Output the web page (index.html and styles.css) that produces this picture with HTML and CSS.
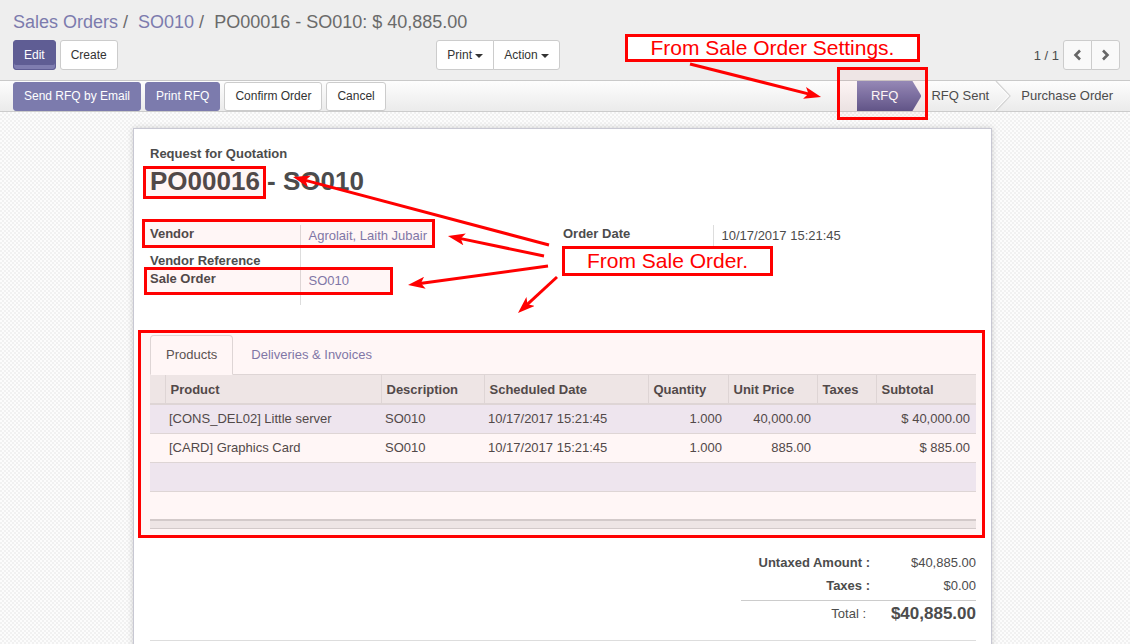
FILE: index.html
```html
<!DOCTYPE html>
<html>
<head>
<meta charset="utf-8">
<title>PO00016 - SO010</title>
<link rel="stylesheet" href="styles.css">
</head>
<body>
<div class="cp">
  <ol class="bc">
    <li><a>Sales Orders</a></li>
    <li><a>SO010</a></li>
    <li class="active">PO00016 - SO010: $ 40,885.00</li>
  </ol>
  <div class="cp-row">
    <div class="cp-left">
      <div class="cp-btns">
        <button class="btn btn-edit">Edit</button>
        <button class="btn">Create</button>
      </div>
      <div class="btn-group">
        <button class="btn">Print <span class="caret"></span></button>
        <button class="btn">Action <span class="caret"></span></button>
      </div>
    </div>
    <div class="cp-right">
      <span class="pager-val">1 / 1</span>
      <div class="btn-group">
        <button class="btn pbtn"><svg width="9" height="12" viewBox="0 0 9 12"><path d="M7 1.5 L2.5 6 L7 10.5" fill="none" stroke="#666" stroke-width="2.6"/></svg></button>
        <button class="btn pbtn"><svg width="9" height="12" viewBox="0 0 9 12"><path d="M2 1.5 L6.5 6 L2 10.5" fill="none" stroke="#666" stroke-width="2.6"/></svg></button>
      </div>
    </div>
  </div>
</div>

<div class="sb">
  <div class="sb-btns">
    <button class="btn btn-primary">Send RFQ by Email</button>
    <button class="btn btn-primary">Print RFQ</button>
    <button class="btn">Confirm Order</button>
    <button class="btn">Cancel</button>
  </div>
  <div class="sb-status">
    <span class="st st-active">RFQ</span>
    <span class="st st-sent">RFQ Sent</span>
    <svg class="chev" width="17" height="30" viewBox="0 0 17 30"><polyline points="1,0 15,15 1,30" fill="none" stroke="#d5d5d5" stroke-width="1.3"/><polyline points="0,1 13.6,15 0,29" fill="none" stroke="#fff" stroke-width="1"/></svg>
    <span class="st st-po">Purchase Order</span>
  </div>
</div>

<div class="fbg">
  <div class="sheet">
    <div class="title-lbl">Request for Quotation</div>
    <h1 class="title">PO00016 - SO010</h1>
    <div class="groups">
      <table class="grp">
        <tr class="r1"><td class="lbl">Vendor</td><td class="val"><a class="lnk">Agrolait, Laith Jubair</a></td></tr>
        <tr class="r2"><td class="lbl">Vendor Reference</td><td class="val"></td></tr>
        <tr class="r3"><td class="lbl">Sale Order</td><td class="val"><a class="lnk">SO010</a></td></tr>
      </table>
      <table class="grp">
        <tr class="r1"><td class="lbl">Order Date</td><td class="val">10/17/2017 15:21:45</td></tr>
      </table>
    </div>

    <div class="nb">
      <ul class="tabs">
        <li><a class="tab active">Products</a></li>
        <li><a class="tab">Deliveries &amp; Invoices</a></li>
      </ul>
      <table class="lines">
        <colgroup>
          <col class="c0"><col class="c1"><col class="c2"><col class="c3"><col class="c4"><col class="c5"><col class="c6"><col class="c7">
        </colgroup>
        <thead>
          <tr><th></th><th>Product</th><th>Description</th><th>Scheduled Date</th><th>Quantity</th><th>Unit Price</th><th>Taxes</th><th>Subtotal</th></tr>
        </thead>
        <tbody>
          <tr class="odd"><td></td><td>[CONS_DEL02] Little server</td><td>SO010</td><td>10/17/2017 15:21:45</td><td class="num">1.000</td><td class="num">40,000.00</td><td></td><td class="num">$ 40,000.00</td></tr>
          <tr><td></td><td>[CARD] Graphics Card</td><td>SO010</td><td>10/17/2017 15:21:45</td><td class="num">1.000</td><td class="num">885.00</td><td></td><td class="num">$ 885.00</td></tr>
          <tr class="odd"><td colspan="8"></td></tr>
          <tr><td colspan="8"></td></tr>
        </tbody>
        <tfoot>
          <tr><td colspan="8"></td></tr>
        </tfoot>
      </table>
    </div>

    <div class="totals-wrap">
      <table class="totals">
        <tr><td class="tl">Untaxed Amount :</td><td class="tv">$40,885.00</td></tr>
        <tr><td class="tl">Taxes :</td><td class="tv">$0.00</td></tr>
        <tr class="sp"><td colspan="2"></td></tr>
        <tr class="tot"><td class="tl tl-total">Total :</td><td class="tv tv-total">$40,885.00</td></tr>
      </table>
    </div>
    <div class="divider"></div>
  </div>
</div>

<svg class="arrows" width="1130" height="644" viewBox="0 0 1130 644">
  <defs>
    <marker id="ah" viewBox="0 0 17 12" refX="5" refY="6" markerWidth="17" markerHeight="12" markerUnits="userSpaceOnUse" orient="auto">
      <path d="M0,0 L17,6 L0,12 L4,6 Z" fill="#ff0000"/>
    </marker>
  </defs>
  <g stroke="#ff0000" stroke-width="3" fill="none" marker-end="url(#ah)">
    <line x1="690" y1="64" x2="809.4" y2="94.1"/>
    <line x1="549" y1="245" x2="304.6" y2="180.1"/>
    <line x1="544" y1="256" x2="459.7" y2="238.4"/>
    <line x1="548" y1="266" x2="419.9" y2="283.4"/>
    <line x1="557" y1="277" x2="526.8" y2="304.9"/>
  </g>
</svg>

<div class="ann note note-a">From Sale Order Settings.</div>
<div class="ann hl hl-rfq"></div>
<div class="ann hl hl-po"></div>
<div class="ann hl hl-vendor"></div>
<div class="ann hl hl-so"></div>
<div class="ann note note-f">From Sale Order.</div>
<div class="ann hl hl-nb"></div>
</body>
</html>
```

FILE: styles.css
```css
* { box-sizing: border-box; }
html, body { margin: 0; padding: 0; }
body {
  position: relative;
  width: 1130px;
  height: 644px;
  overflow: hidden;
  font-family: "Liberation Sans", Arial, sans-serif;
  font-size: 13px;
  color: #4c4c4c;
  background: #fff;
}
a { cursor: pointer; }

/* ---------- control panel ---------- */
.cp {
  background: #eeeeee;
  padding: 10px 10px 10px 13px;
  border-bottom: 1px solid #c9c9c9;
}
.bc {
  list-style: none;
  margin: 0 0 6px;
  padding: 0;
  display: flex;
  font-size: 18px;
  line-height: 24px;
  color: #6a6a6a;
}
.bc a { color: #7c7bad; }
.bc li + li::before { content: "/\00a0"; padding: 0 5px; color: #6a6a6a; }
.cp-row { display: flex; height: 30px; }
.cp-left {
  width: 553px;
  display: flex;
  justify-content: space-between;
  padding-right: 6px;
}
.cp-btns { display: flex; gap: 4px; }
.cp-right {
  flex: 1;
  display: flex;
  justify-content: flex-end;
  align-items: center;
  gap: 4px;
}
.pager-val { font-size: 13px; color: #4c4c4c; }

.btn {
  font-family: "Liberation Sans", Arial, sans-serif;
  font-size: 12px;
  line-height: 18px;
  padding: 5px 10px;
  height: 30px;
  margin: 0;
  border: 1px solid #cccccc;
  border-radius: 3px;
  background: #ffffff;
  color: #333333;
  white-space: nowrap;
}
.btn-primary { background: #7c7bad; border-color: #7c7bad; color: #fff; }
.btn-edit {
  background: #5f5d94;
  border-color: #5f5d94;
  color: #fff;
  box-shadow: inset 0 -4px 0 #7f7db0;
}
.btn-group { display: flex; }
.btn-group .btn { border-radius: 0; }
.btn-group .btn + .btn { margin-left: -1px; }
.btn-group .btn:first-child { border-radius: 3px 0 0 3px; }
.btn-group .btn:last-child { border-radius: 0 3px 3px 0; }
.caret {
  display: inline-block;
  width: 0; height: 0;
  margin-left: 0;
  vertical-align: middle;
  border-top: 4px solid #333;
  border-left: 4px solid transparent;
  border-right: 4px solid transparent;
}
.pbtn {
  width: 29px;
  padding: 0;
  background: #f9f9f9;
  display: flex;
  align-items: center;
  justify-content: center;
}

/* ---------- status bar ---------- */
.sb {
  display: flex;
  justify-content: space-between;
  height: 31px;
  padding-left: 13px;
  background: linear-gradient(#fdfdfd, #ebebeb);
  border-bottom: 1px solid #cccccc;
}
.sb-btns { display: flex; gap: 4px; align-items: center; }
.sb-btns .btn { height: 29px; padding: 4px 10px 6px; }
.sb-status { display: flex; align-items: stretch; height: 30px; }
.st { line-height: 30px; font-size: 13px; color: #4c4c4c; white-space: nowrap; }
.st-active {
  padding: 0 23px 0 14px;
  color: #fff;
  background: linear-gradient(#928dbd, #5c588d);
  clip-path: polygon(0 0, calc(100% - 9px) 0, 100% 50%, calc(100% - 9px) 100%, 0 100%);
}
.st-sent { padding: 0 6px 0 10px; }
.chev { display: block; }
.st-po { padding: 0 17px 0 9px; }

/* ---------- form ---------- */
.fbg {
  height: 532px;
  padding-top: 16px;
  overflow: hidden;
  background-color: #f8f8f8;
  background-image: repeating-conic-gradient(#f1f1f1 0 25%, #fcfcfc 0 50%);
  background-size: 4px 4px;
}
.sheet {
  width: 859px;
  margin-left: 133px;
  min-height: 600px;
  padding: 16px 15px 0 16px;
  background: #fff;
  border: 1px solid #c8c8d3;
  box-shadow: 0 0 6px rgba(0, 0, 0, 0.18);
}
.title-lbl { font-weight: bold; line-height: 18px; }
.title {
  margin: 3px 0 0;
  font-size: 26px;
  line-height: 30px;
  font-weight: bold;
  color: #4c4c4c;
}
.groups { display: flex; margin-top: 29px; }
.grp { flex: 1; border-collapse: collapse; align-self: flex-start; }
.grp td { padding: 0; vertical-align: top; line-height: 18px; }
.grp .lbl {
  width: 150px;
  font-weight: bold;
  border-right: 1px solid #dddddd;
}
.grp .val { padding: 2px 0 0 8px; }
.grp .r1 { height: 27px; }
.grp .r2 { height: 18px; }
.grp .r3 { height: 35px; }
.lnk { color: #7c7bad; }

/* notebook */
.nb { margin-top: 30px; }
.tabs {
  list-style: none;
  margin: 0;
  padding: 0;
  display: flex;
  border-bottom: 1px solid #dddddd;
}
.tabs li { margin-bottom: -1px; }
.tab {
  display: block;
  padding: 10px 15px;
  line-height: 18px;
  margin-right: 2px;
  border: 1px solid transparent;
  border-radius: 4px 4px 0 0;
  color: #7c7bad;
}
.tab.active {
  color: #555555;
  background: #fff;
  border-color: #dddddd #dddddd transparent;
}
.lines {
  width: 100%;
  border-collapse: collapse;
  table-layout: fixed;
}
.c0 { width: 15px; }
.c1 { width: 216px; }
.c2 { width: 103px; }
.c3 { width: 164px; }
.c4 { width: 80px; }
.c5 { width: 89px; }
.c6 { width: 59px; }
.c7 { width: 100px; }
.lines th {
  height: 29px;
  padding: 0 5px;
  text-align: left;
  font-weight: bold;
  background: #eeeeee;
  border-bottom: 2px solid #dddddd;
  white-space: nowrap;
}
.lines th + th { border-left: 1px solid #dddddd; }
.lines tbody tr { height: 29px; }
.lines tbody tr + tr td { border-top: 1px solid #dddddd; }
.lines td { padding: 0 4px; white-space: nowrap; overflow: hidden; }
.lines tbody tr.odd { background: #eeeef7; }
.lines td.num { text-align: right; padding-right: 6px; }
.lines tfoot td {
  height: 8px;
  padding: 0;
  background: #eeeeee;
  border-top: 2px solid #d2d2d2;
  border-bottom: 1px solid #d2d2d2;
}

/* totals */
.totals-wrap { display: flex; justify-content: flex-end; margin-top: 23px; }
.totals { width: 235px; border-collapse: collapse; }
.totals tr { height: 23px; }
.totals td { padding: 0; line-height: 18px; white-space: nowrap; }
.totals .tl { text-align: right; font-weight: bold; padding-right: 6px; }
.totals .tv { text-align: right; width: 100px; }
.totals .sp { height: 3px; }
.totals .tot { height: 26px; }
.totals .tot td { border-top: 1px solid #cccccc; }
.totals .tl-total { font-weight: normal; padding-right: 10px; }
.totals .tv-total { font-size: 17px; font-weight: bold; }
.divider { margin-top: 13px; border-top: 1px solid #dddddd; }

/* ---------- annotations ---------- */
.arrows { position: absolute; left: 0; top: 0; pointer-events: none; }
.ann { position: absolute; border: 3px solid #ff0000; }
.hl { background: rgba(255, 0, 0, 0.035); }
.note {
  background: #fff;
  color: #ff0000;
  font-size: 21px;
  line-height: 22px;
  text-align: center;
  white-space: nowrap;
}
.note-a { left: 625px; top: 34px; width: 295px; height: 28px; }
.note-f { left: 562px; top: 246px; width: 211px; height: 30px; padding-top: 1px; }
.hl-rfq { left: 837px; top: 67px; width: 91px; height: 53px; }
.hl-po { left: 143px; top: 166px; width: 123px; height: 33px; }
.hl-vendor { left: 142px; top: 219px; width: 293px; height: 29px; }
.hl-so { left: 144px; top: 267px; width: 249px; height: 28px; }
.hl-nb { left: 138px; top: 330px; width: 847px; height: 208px; }
```
